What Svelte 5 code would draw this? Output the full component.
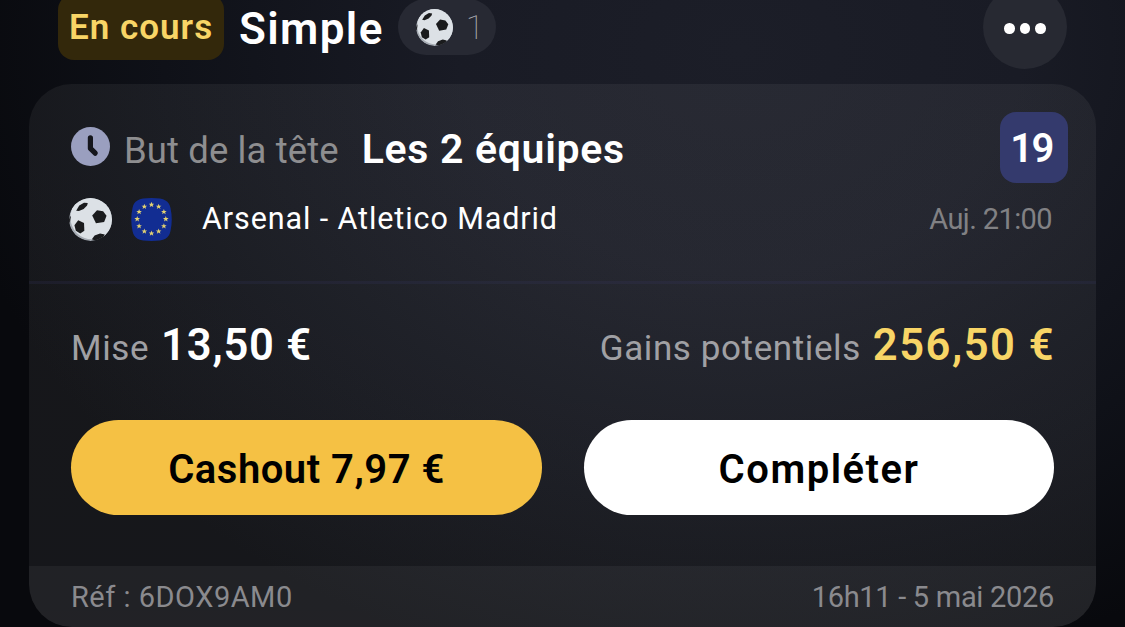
<script>
  const bet = {
    status: 'En cours',
    type: 'Simple',
    count: 1,
    market: 'But de la tête',
    pick: 'Les 2 équipes',
    odds: '19',
    match: 'Arsenal - Atletico Madrid',
    kickoff: 'Auj. 21:00',
    stake: '13,50 €',
    winnings: '256,50 €',
    cashout: '7,97 €',
    ref: '6DOX9AM0',
    placedAt: '16h11 - 5 mai 2026'
  };

  // 12 stars on a circle
  const stars = Array.from({ length: 12 }, (_, i) => {
    const a = (i * Math.PI) / 6;
    return { x: 20.5 + 14.3 * Math.sin(a), y: 21 - 14.3 * Math.cos(a) };
  });
</script>

{#snippet ball(size)}
  <svg class="ball" width={size} height={size} viewBox="0 0 126 126">
    <defs>
      <clipPath id={'ball' + size}><circle cx="63" cy="63" r="63" /></clipPath>
    </defs>
    <g clip-path="url(#ball{size})">
      <circle cx="63" cy="63" r="63" fill="#a5abb3" />
      <circle cx="68" cy="57" r="64" fill="#dce1e6" />
      <g fill="#1a1b1d">
        <path d="M21 37 30 22 44 14 55 15 53 22 43 32 29 38Z" />
        <path d="M68 51 82 36 100 39 110 52 103 70 79 74Z" />
        <path d="M16 80 27 65 44 73 45 96 33 104 20 96Z" />
        <path d="M67 121 75 110 91 104 105 107 98 118 84 127Z" />
        <path d="M0 62 4 52 5 57 3 69 0 73Z" />
      </g>
    </g>
  </svg>
{/snippet}

<div class="screen">
  <header>
    <span class="status">{bet.status}</span>
    <h1>{bet.type}</h1>
    <span class="pill">
      {@render ball(37)}
      <span class="count">{bet.count}</span>
    </span>
    <button class="more" aria-label="Plus d'options">
      <i></i><i></i><i></i>
    </button>
  </header>

  <article class="card">
    <section class="selection">
      <div class="row market-row">
        <svg class="clock" width="39" height="39" viewBox="0 0 39 39">
          <circle cx="19.5" cy="19.5" r="19.5" fill="#9a9fbf" />
          <path d="M19.4 10.8V21.4L24.2 26.2" fill="none" stroke="#15161c" stroke-width="5.2" stroke-linecap="round" stroke-linejoin="round" />
        </svg>
        <div class="labels">
          <span class="market">{bet.market}</span>
          <strong class="pick">{bet.pick}</strong>
        </div>
        <span class="odds">{bet.odds}</span>
      </div>

      <div class="row match-row">
        {@render ball(43)}
        <svg class="flag" width="41" height="43" viewBox="0 0 41 43">
          <path d="M20.5 0C34 0 38 3 39.5 10Q42 21.5 39.5 33C38 40 34 43 20.5 43S3 40 1.5 33Q-1 21.5 1.5 10C3 3 7 0 20.5 0Z" fill="#122d92" />
          {#each stars as s}
            <path
              transform="translate({s.x} {s.y})"
              d="M0-2.9.75-.9 2.8-.9 1.2.4 1.8 2.4 0 1.2-1.8 2.4-1.2.4-2.8-.9-.75-.9Z"
              fill="#e3d272"
            />
          {/each}
        </svg>
        <span class="match">{bet.match}</span>
        <span class="kickoff">{bet.kickoff}</span>
      </div>
    </section>

    <section class="amounts">
      <div class="money">
        <span class="label">Mise</span>
        <strong class="stake">{bet.stake}</strong>
        <span class="label push">Gains potentiels</span>
        <strong class="winnings">{bet.winnings}</strong>
      </div>
      <div class="actions">
        <button class="cashout">Cashout {bet.cashout}</button>
        <button class="complete">Compléter</button>
      </div>
    </section>

    <footer>
      <span class="ref">Réf : {bet.ref}</span>
      <span>{bet.placedAt}</span>
    </footer>
  </article>
</div>

<style>
  :global(body) {
    margin: 0;
    overflow: hidden;
    background: #07080c;
  }

  .screen {
    box-sizing: border-box;
    height: 627px;
    padding: 0 29px;
    overflow: hidden;
    background: radial-gradient(ellipse 800px 640px at 740px 50px, #1c1e28 0%, #191b25 35%, #0f1118 72%, #08090d 100%);
    font-family: Roboto, 'Liberation Sans', sans-serif;
    color: #fff;
    white-space: nowrap;
  }

  button {
    border: 0;
    padding: 0;
    font-family: inherit;
  }

  svg {
    display: block;
    flex: none;
  }

  header {
    display: flex;
    align-items: center;
    height: 54px;
    padding: 0 29px;
    margin-bottom: 30px;
  }

  .status {
    box-sizing: border-box;
    width: 166px;
    height: 66px;
    padding-left: 11px;
    border-radius: 16px;
    background: #33280b;
    color: #f8d566;
    font-size: 35px;
    font-weight: 600;
    line-height: 68px;
    letter-spacing: 1px;
  }

  h1 {
    margin: 4px 14px 0 15px;
    font-size: 44px;
    font-weight: 600;
    line-height: 52px;
    letter-spacing: 1.4px;
  }

  .pill {
    box-sizing: border-box;
    display: flex;
    align-items: center;
    width: 98px;
    height: 56px;
    padding-left: 18px;
    border-radius: 28px;
    background: #272933;
  }

  .count {
    margin-left: 13px;
    color: #b0b1b6;
    font-size: 34px;
    font-weight: 100;
  }

  .more {
    display: flex;
    align-items: center;
    justify-content: center;
    gap: 5px;
    width: 84px;
    height: 84px;
    margin-left: auto;
    border-radius: 50%;
    background: #272932;
  }

  .more i {
    width: 10.5px;
    height: 10.5px;
    margin-top: 3px;
    border-radius: 50%;
    background: #fff;
  }

  .card {
    height: 543px;
    border-radius: 43px;
    overflow: hidden;
    background: linear-gradient(rgba(250, 250, 245, 0.055), rgba(255, 250, 250, 0.06));
  }

  .selection {
    height: 169px;
    padding: 28px 42px 0;
    border-bottom: 3px solid rgba(60, 62, 120, 0.16);
  }

  .row {
    display: flex;
    align-items: center;
  }

  .market-row {
    height: 71px;
    margin-right: -14px;
  }

  .clock {
    margin-bottom: 2px;
  }

  .labels {
    display: flex;
    align-items: baseline;
    margin: 3px 0 0 14px;
  }

  .market {
    color: #8e8e90;
    font-size: 36.5px;
    letter-spacing: 0.1px;
  }

  .pick {
    margin-left: 23px;
    font-size: 41px;
    font-weight: 600;
    letter-spacing: 0.7px;
  }

  .odds {
    box-sizing: border-box;
    width: 68px;
    height: 71px;
    margin-left: auto;
    padding-right: 5px;
    border-radius: 16px;
    background: #343a6d;
    font-size: 40px;
    font-weight: 600;
    line-height: 74px;
    letter-spacing: -1.5px;
    text-align: center;
  }

  .match-row {
    height: 43px;
    margin: 15px 0 0 -2px;
  }

  .flag {
    margin-left: 19px;
  }

  .match {
    margin: -3px 0 0 30px;
    font-size: 30.5px;
    letter-spacing: 0.9px;
  }

  .kickoff {
    margin: -1px 2px 0 auto;
    color: #818184;
    font-size: 29px;
    letter-spacing: -0.6px;
  }

  .amounts {
    height: 245px;
    padding: 37px 42px 0;
  }

  .money {
    display: flex;
    align-items: baseline;
    height: 49px;
    margin-right: -1px;
    line-height: 50px;
  }

  .label {
    color: #a0a0a4;
    font-size: 35px;
    letter-spacing: 0.6px;
  }

  .push {
    margin-left: auto;
  }

  .stake,
  .winnings {
    font-size: 43.5px;
    font-weight: 600;
  }

  .stake {
    margin-left: 12px;
    letter-spacing: 0.8px;
  }

  .winnings {
    margin-left: 12px;
    color: #f8d566;
    letter-spacing: 1.5px;
  }

  .actions {
    display: grid;
    grid-template-columns: 471px 470px;
    gap: 42px;
    margin-top: 50px;
  }

  .actions button {
    height: 95px;
    padding-top: 3px;
    border-radius: 48px;
    color: #000;
    font-size: 40px;
    font-weight: 600;
  }

  .actions .cashout {
    background: #f5c144;
    letter-spacing: 0.5px;
  }

  .actions .complete {
    background: #fff;
    letter-spacing: 1.5px;
  }

  footer {
    display: flex;
    align-items: center;
    justify-content: space-between;
    height: 61px;
    padding: 0 42px;
    background: rgba(255, 250, 255, 0.05);
    color: #8a8a8e;
    font-size: 29px;
    letter-spacing: -0.3px;
  }

  .ref {
    letter-spacing: 0.5px;
  }
</style>
